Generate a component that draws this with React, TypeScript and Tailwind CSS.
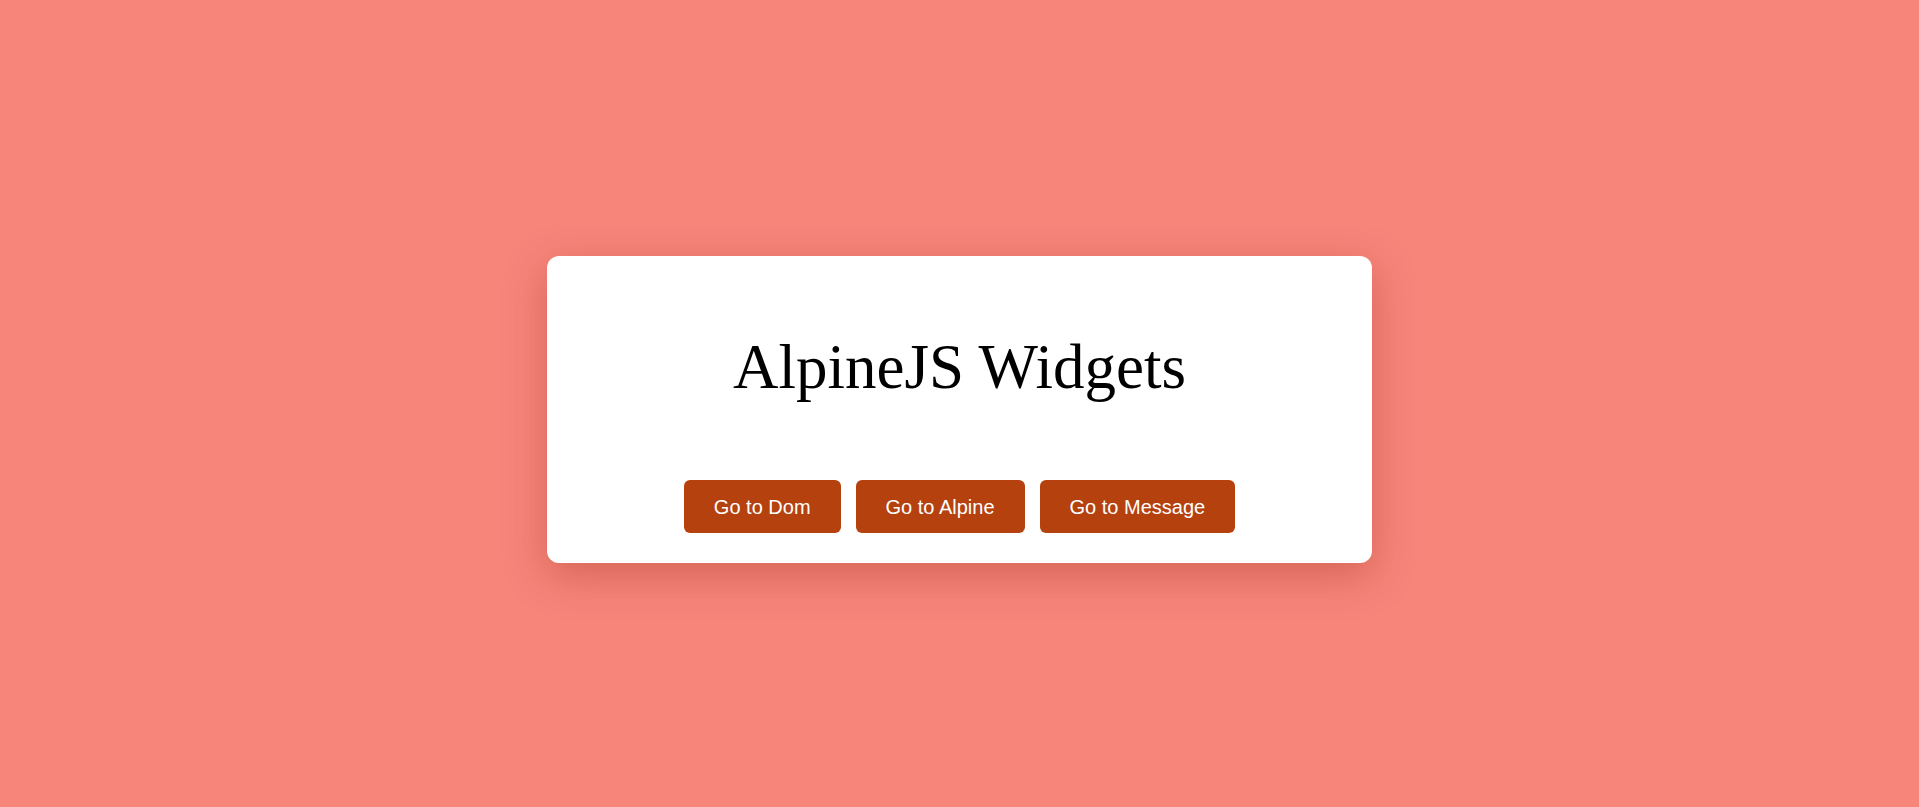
import React from 'react';

const links = ['Go to Dom', 'Go to Alpine', 'Go to Message'];

const App: React.FC = () => (
    <div className="min-h-screen w-full bg-[#f7857a] flex items-center justify-center pt-3">
        {/* Card */}
        <div className="w-[825px] h-[307px] bg-white rounded-xl shadow-[0_12px_40px_rgba(150,40,20,0.35)] flex flex-col items-center pt-[80px]">
            <h1 className="text-[63px] leading-none text-black font-['Liberation_Serif','Times_New_Roman',serif]">
                AlpineJS Widgets
            </h1>
            <div className="flex gap-[15px] mt-[81px]">
                {links.map((label) => (
                    <button
                        key={label}
                        className="h-[53px] px-[30px] rounded-md bg-[#b5410f] text-white text-[20px] font-['Liberation_Sans',Arial,sans-serif]"
                    >
                        {label}
                    </button>
                ))}
            </div>
        </div>
    </div>
);

export default App;
